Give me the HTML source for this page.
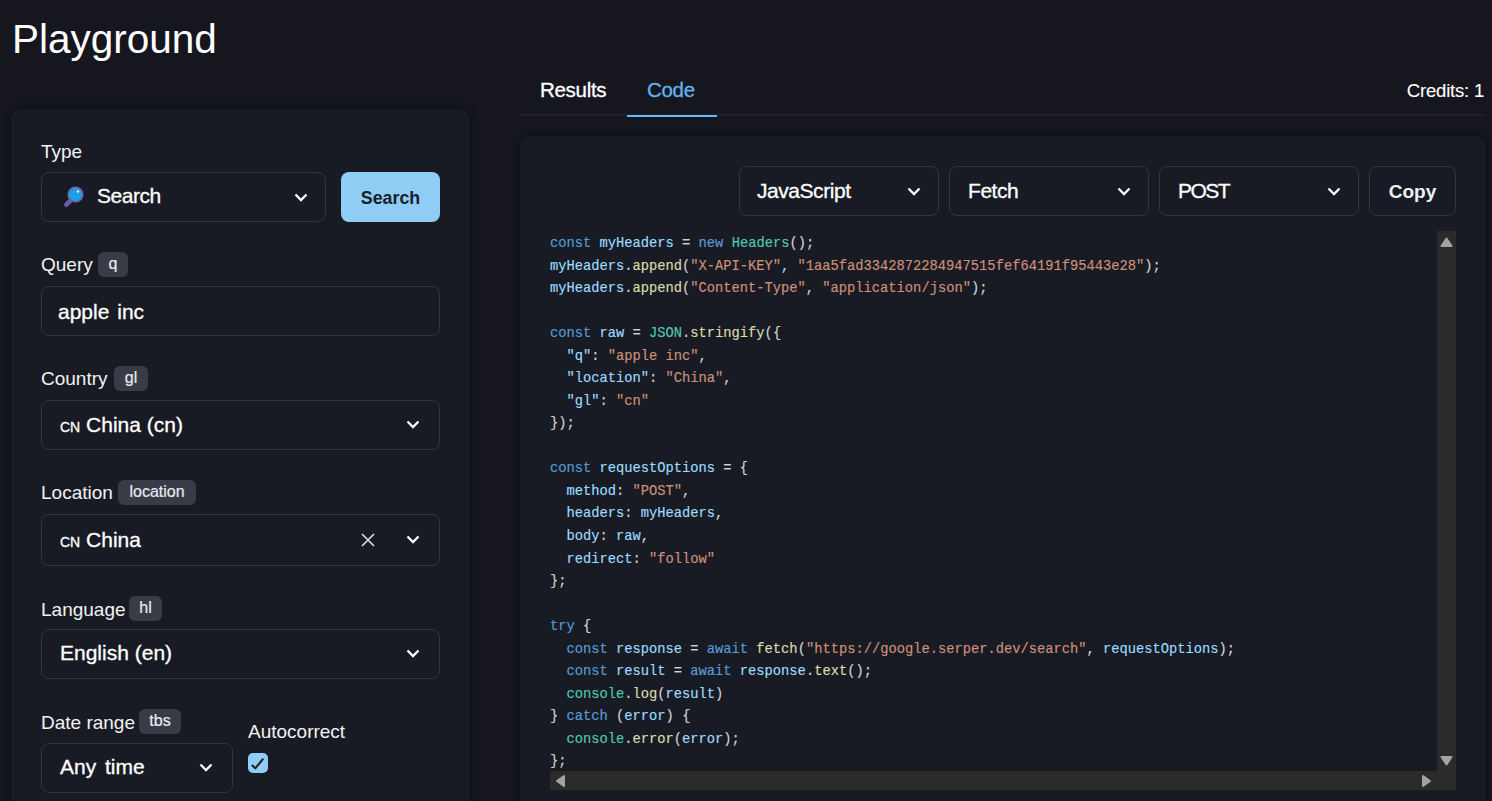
<!DOCTYPE html>
<html><head><meta charset="utf-8">
<style>
*{box-sizing:border-box;margin:0;padding:0}
html,body{width:1492px;height:801px;overflow:hidden;background:#16161f;color:#fff;font-family:"Liberation Sans",sans-serif}
.abs{position:absolute}
.title{left:12px;top:14px;font-size:40.5px;line-height:50px;color:#fff;white-space:nowrap}
.panel{left:11px;top:109px;width:459px;height:720px;background:#191b24;border-radius:10px;box-shadow:0 0 2px rgba(0,0,0,.35),0 0 9px rgba(0,0,0,.35)}
.lbl{font-size:19px;line-height:22px;color:#f2f2f2;white-space:nowrap}
.badge{background:#393c47;border-radius:6px;font-size:16px;color:#e8eaf0;text-align:center;white-space:nowrap;-webkit-text-stroke-width:0.2px;padding-top:1px}
.box{border:1.5px solid #2d3647;border-radius:8px}
.val{font-size:21px;color:#fff;white-space:nowrap;letter-spacing:-0.45px;-webkit-text-stroke-width:0.3px}
.lv{letter-spacing:0}
.chev{width:14px;height:9px}
.cpanel{left:520px;top:136px;width:966px;height:700px;background:#191b24;border-radius:10px;box-shadow:0 0 2px rgba(0,0,0,.35),0 0 9px rgba(0,0,0,.35)}
.code{left:550px;top:233.3px;font-family:"Liberation Mono",monospace;font-size:13.75px;line-height:22.52px;white-space:pre;color:#d4d4d4;-webkit-text-stroke-width:0.15px}
.k{color:#569cd6}.v{color:#9cdcfe}.t{color:#4ec9b0}.s{color:#ce9178}.f{color:#dcdcaa}.p{color:#d4d4d4}.b,.m{color:#d4d4d4}
</style></head><body>
<div class="abs title">Playground</div>
<div class="abs panel"></div>

<!-- Type -->
<div class="abs lbl" style="left:41px;top:141px">Type</div>
<div class="abs box" style="left:41px;top:172px;width:285px;height:50px"></div>
<svg class="abs" style="left:62px;top:184px" width="24" height="24" viewBox="0 0 24 24">
  <line x1="4.3" y1="20.7" x2="10" y2="15" stroke="#6b5d9f" stroke-width="4.6" stroke-linecap="round"/>
  <circle cx="13.5" cy="10.5" r="7.3" fill="#1d9fe4" stroke="#7060a6" stroke-width="1.6"/>
  <circle cx="16" cy="7.5" r="1.2" fill="#e8f6ff"/>
</svg>
<div class="abs val" style="left:97px;top:184px">Search</div>
<svg class="abs chev" style="left:293.5px;top:193px" viewBox="0 0 14 9"><path d="M1.5 1.5 L7 7 L12.5 1.5" fill="none" stroke="#fff" stroke-width="2.3"/></svg>
<div class="abs" style="left:341px;top:172px;width:99px;height:50px;background:#90cdf4;border-radius:8px"></div>
<div class="abs" style="left:341px;top:188px;width:99px;text-align:center;font-size:17.8px;font-weight:bold;color:#1a202c">Search</div>

<!-- Query -->
<div class="abs lbl" style="left:41px;top:254px">Query</div>
<div class="abs badge" style="left:98px;top:252px;width:30px;height:25px;line-height:22px">q</div>
<div class="abs box" style="left:41px;top:286px;width:399px;height:50px"></div>
<div class="abs val lv" style="left:58px;top:299.5px;word-spacing:2px">apple inc</div>

<!-- Country -->
<div class="abs lbl" style="left:41px;top:368px">Country</div>
<div class="abs badge" style="left:114px;top:366px;width:34px;height:25px;line-height:22px">gl</div>
<div class="abs box" style="left:41px;top:400px;width:399px;height:50px"></div>
<div class="abs val lv" style="left:60px;top:412.7px"><span style="font-size:14px">CN</span> China (cn)</div>
<svg class="abs chev" style="left:406px;top:420px" viewBox="0 0 14 9"><path d="M1.5 1.5 L7 7 L12.5 1.5" fill="none" stroke="#fff" stroke-width="2.3"/></svg>

<!-- Location -->
<div class="abs lbl" style="left:41px;top:482px">Location</div>
<div class="abs badge" style="left:118px;top:480px;width:78px;height:25px;line-height:22px">location</div>
<div class="abs box" style="left:41px;top:514px;width:399px;height:52px"></div>
<div class="abs val lv" style="left:60px;top:527.7px"><span style="font-size:14px">CN</span> China</div>
<svg class="abs" style="left:361px;top:533px" width="14" height="14" viewBox="0 0 14 14"><path d="M1 1 L13 13 M13 1 L1 13" stroke="#d8dee9" stroke-width="1.6"/></svg>
<svg class="abs chev" style="left:406px;top:535px" viewBox="0 0 14 9"><path d="M1.5 1.5 L7 7 L12.5 1.5" fill="none" stroke="#fff" stroke-width="2.3"/></svg>

<!-- Language -->
<div class="abs lbl" style="left:41px;top:599px">Language</div>
<div class="abs badge" style="left:129px;top:596px;width:33px;height:25px;line-height:22px">hl</div>
<div class="abs box" style="left:41px;top:629px;width:399px;height:50px"></div>
<div class="abs val lv" style="left:60px;top:641.2px">English (en)</div>
<svg class="abs chev" style="left:406px;top:649px" viewBox="0 0 14 9"><path d="M1.5 1.5 L7 7 L12.5 1.5" fill="none" stroke="#fff" stroke-width="2.3"/></svg>

<!-- Date range -->
<div class="abs lbl" style="left:41px;top:712px">Date range</div>
<div class="abs badge" style="left:139px;top:709px;width:42px;height:25px;line-height:22px">tbs</div>
<div class="abs box" style="left:41px;top:743px;width:192px;height:50px"></div>
<div class="abs val lv" style="left:60px;top:755.2px;word-spacing:3px">Any time</div>
<svg class="abs chev" style="left:199px;top:763px" viewBox="0 0 14 9"><path d="M1.5 1.5 L7 7 L12.5 1.5" fill="none" stroke="#fff" stroke-width="2.3"/></svg>
<div class="abs lbl" style="left:248px;top:721px">Autocorrect</div>
<div class="abs" style="left:248px;top:753px;width:20px;height:20px;background:#90cdf4;border-radius:5px"></div>
<svg class="abs" style="left:248px;top:753px" width="20" height="20" viewBox="0 0 20 20"><path d="M3.8 12 L7.3 15.3 L15.3 5.6" fill="none" stroke="#1a202c" stroke-width="2.1"/></svg>

<!-- Right: tabs -->
<div class="abs" style="left:520px;top:114px;width:965px;height:2px;background:#1e212b"></div>
<div class="abs" style="left:627px;top:115px;width:90px;height:2px;background:#66bcf2"></div>
<div class="abs val" style="left:540px;top:78px;font-size:20.5px;letter-spacing:-0.3px">Results</div>
<div class="abs val" style="left:647px;top:78px;font-size:20.5px;letter-spacing:-0.3px;color:#63b3ed">Code</div>
<div class="abs val" style="left:1379px;top:79.6px;width:105px;text-align:right;font-size:18.5px;letter-spacing:-0.2px;-webkit-text-stroke-width:0.1px">Credits: 1</div>

<div class="abs cpanel"></div>
<div class="abs box" style="left:739px;top:166px;width:200px;height:50px"></div>
<div class="abs val" style="left:757px;top:179px">JavaScript</div>
<svg class="abs chev" style="left:906.5px;top:187px" viewBox="0 0 14 9"><path d="M1.5 1.5 L7 7 L12.5 1.5" fill="none" stroke="#fff" stroke-width="2.3"/></svg>
<div class="abs box" style="left:949px;top:166px;width:200px;height:50px"></div>
<div class="abs val" style="left:968px;top:179px">Fetch</div>
<svg class="abs chev" style="left:1117px;top:187px" viewBox="0 0 14 9"><path d="M1.5 1.5 L7 7 L12.5 1.5" fill="none" stroke="#fff" stroke-width="2.3"/></svg>
<div class="abs box" style="left:1159px;top:166px;width:200px;height:50px"></div>
<div class="abs val" style="left:1178px;top:179px;letter-spacing:-1.5px">POST</div>
<svg class="abs chev" style="left:1327px;top:187px" viewBox="0 0 14 9"><path d="M1.5 1.5 L7 7 L12.5 1.5" fill="none" stroke="#fff" stroke-width="2.3"/></svg>
<div class="abs box" style="left:1369px;top:166px;width:87px;height:50px"></div>
<div class="abs" style="left:1369px;top:181px;width:87px;text-align:center;font-size:19px;font-weight:bold;color:#edf2f7">Copy</div>

<!-- scrollbars -->
<div class="abs" style="left:1437px;top:231px;width:19px;height:540px;background:#2b2b2b"></div>
<div class="abs" style="left:550px;top:771px;width:906px;height:19px;background:#2b2b2b"></div>

<svg class="abs" style="left:1437px;top:231px" width="19" height="559" viewBox="0 0 19 559">
<path d="M4.5 15 L9.5 7.5 L14.5 15 Z" fill="#a3a3a3" stroke="#a3a3a3" stroke-width="2" stroke-linejoin="round"/>
<path d="M4.5 526 L14.5 526 L9.5 533.5 Z" fill="#a3a3a3" stroke="#a3a3a3" stroke-width="2" stroke-linejoin="round"/>
</svg>
<svg class="abs" style="left:550px;top:771px" width="906" height="19" viewBox="0 0 906 19">
<path d="M14 5 L14 15 L7 10 Z" fill="#a3a3a3" stroke="#a3a3a3" stroke-width="2" stroke-linejoin="round"/>
<path d="M873 5 L873 15 L880 10 Z" fill="#a3a3a3" stroke="#a3a3a3" stroke-width="2" stroke-linejoin="round"/>
</svg>
<div class="abs code"><span class="k">const</span> <span class="v">myHeaders</span> <span class="p">=</span> <span class="k">new</span> <span class="t">Headers</span><span class="b">()</span>;
<span class="v">myHeaders</span>.<span class="f">append</span><span class="b">(</span><span class="s">"X-API-KEY"</span>, <span class="s">"1aa5fad3342872284947515fef64191f95443e28"</span><span class="b">)</span>;
<span class="v">myHeaders</span>.<span class="f">append</span><span class="b">(</span><span class="s">"Content-Type"</span>, <span class="s">"application/json"</span><span class="b">)</span>;

<span class="k">const</span> <span class="v">raw</span> = <span class="t">JSON</span>.<span class="f">stringify</span><span class="b">(</span><span class="m">{</span>
  <span class="v">"q"</span>: <span class="s">"apple inc"</span>,
  <span class="v">"location"</span>: <span class="s">"China"</span>,
  <span class="v">"gl"</span>: <span class="s">"cn"</span>
<span class="m">}</span><span class="b">)</span>;

<span class="k">const</span> <span class="v">requestOptions</span> = <span class="b">{</span>
  <span class="v">method</span>: <span class="s">"POST"</span>,
  <span class="v">headers</span>: <span class="v">myHeaders</span>,
  <span class="v">body</span>: <span class="v">raw</span>,
  <span class="v">redirect</span>: <span class="s">"follow"</span>
<span class="b">}</span>;

<span class="k">try</span> <span class="b">{</span>
  <span class="k">const</span> <span class="v">response</span> = <span class="k">await</span> <span class="f">fetch</span><span class="m">(</span><span class="s">"https://google.serper.dev/search"</span>, <span class="v">requestOptions</span><span class="m">)</span>;
  <span class="k">const</span> <span class="v">result</span> = <span class="k">await</span> <span class="v">response</span>.<span class="f">text</span><span class="m">()</span>;
  <span class="t">console</span>.<span class="f">log</span><span class="m">(</span><span class="v">result</span><span class="m">)</span>
<span class="b">}</span> <span class="k">catch</span> <span class="m">(</span><span class="v">error</span><span class="m">)</span> <span class="m">{</span>
  <span class="t">console</span>.<span class="f">error</span><span class="m">(</span><span class="v">error</span><span class="m">)</span>;
<span class="b">}</span>;</div>
</body></html>
